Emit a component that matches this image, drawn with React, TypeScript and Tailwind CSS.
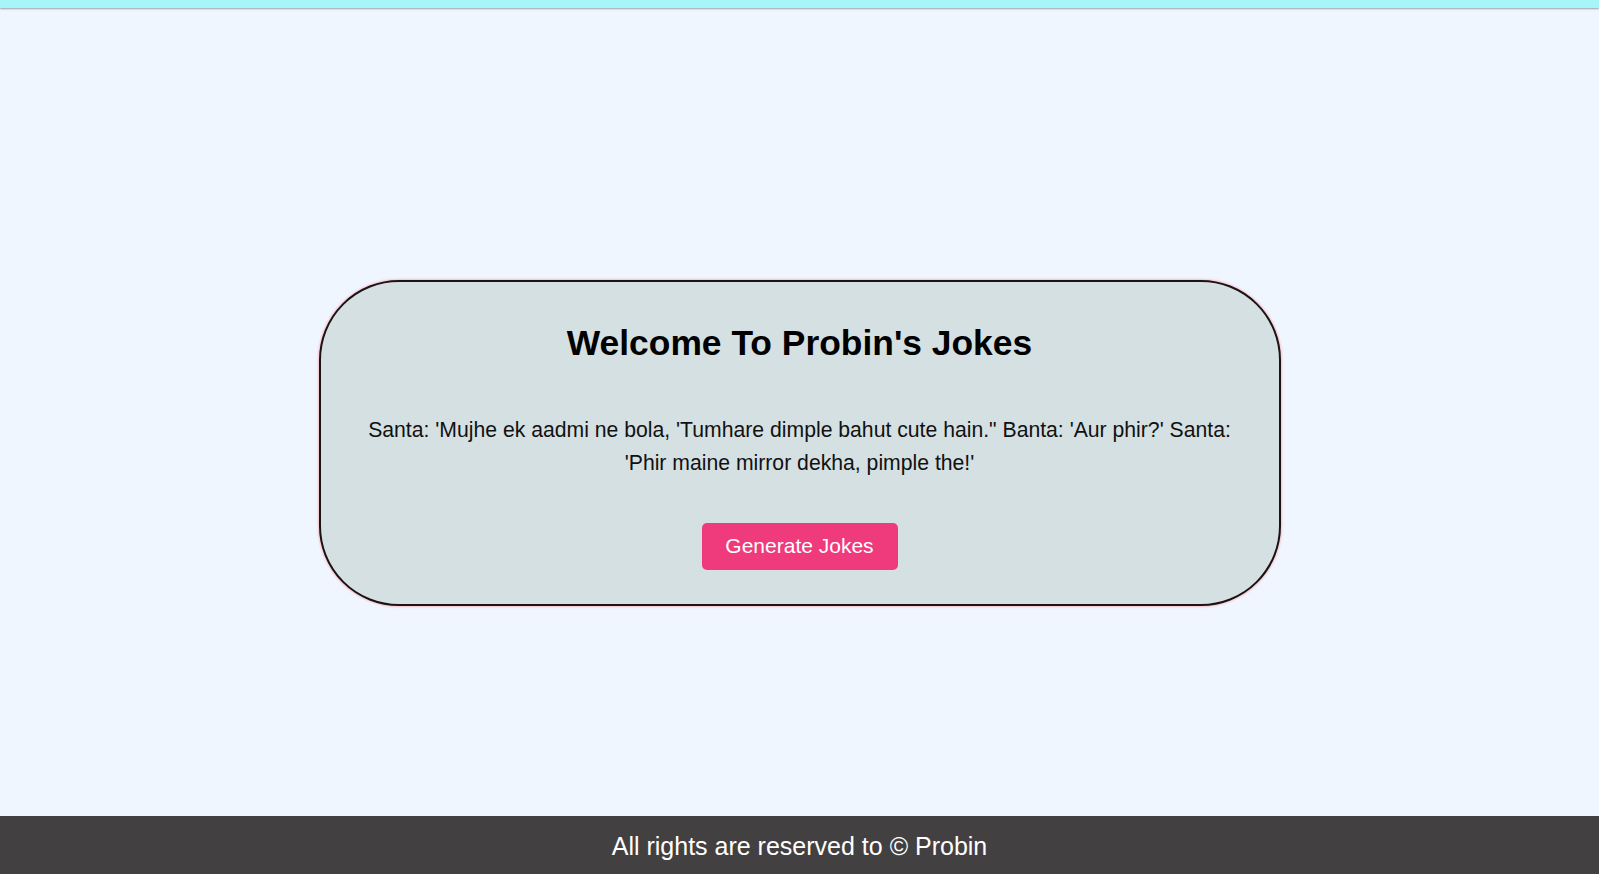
import React from "react";

export default function App() {
  return (
    <div
      className="flex min-h-[874px] flex-col bg-[#eff6ff]"
      style={{ fontFamily: '"Liberation Sans", Arial, sans-serif' }}
    >
      <div className="h-[8px] bg-[#a5f5f9] shadow-[0_1px_2px_rgba(0,0,0,0.35)]" />
      <main className="flex flex-1 items-center justify-center pt-[61px]">
        <div className="flex w-[962px] flex-col items-center rounded-[80px] border-2 border-[#1a1414] bg-[#d5e0e2] px-[40px] pt-[41px] pb-[34px] shadow-[0_0_2px_1px_rgba(255,150,160,0.6)]">
          <h1 className="text-[35.4px] font-bold leading-[40px] text-black">
            Welcome To Probin's Jokes
          </h1>
          <p className="mt-[50px] text-center text-[21.2px] leading-[33px] text-[#111]">
            Santa: 'Mujhe ek aadmi ne bola, 'Tumhare dimple bahut cute hain."
            Banta: 'Aur phir?' Santa: 'Phir maine mirror dekha, pimple the!'
          </p>
          <button className="mt-[44px] h-[47px] w-[196px] rounded-[5px] bg-[#ef3a7c] text-[21px] text-white">
            Generate Jokes
          </button>
        </div>
      </main>
      <footer className="flex h-[58px] items-center justify-center bg-[#434041] pt-[3px] text-[25px] text-white">
        All rights are reserved to © Probin
      </footer>
    </div>
  );
}
